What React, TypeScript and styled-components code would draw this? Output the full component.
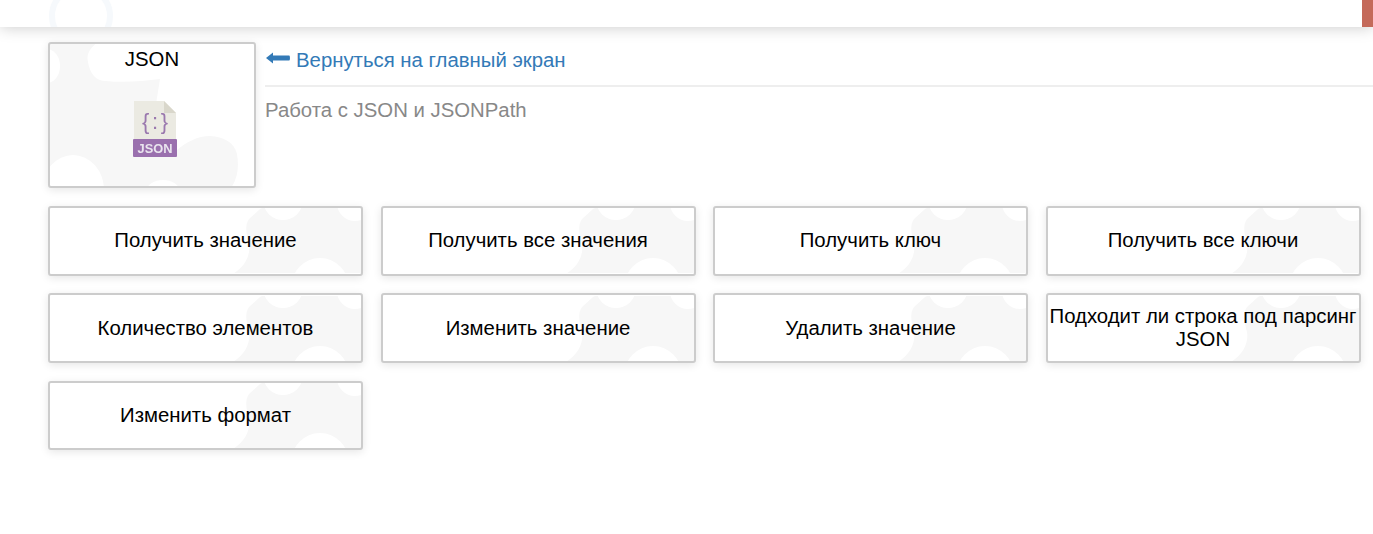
import React from "react";
import styled, { createGlobalStyle } from "styled-components";

const actions = [
  "Получить значение",
  "Получить все значения",
  "Получить ключ",
  "Получить все ключи",
  "Количество элементов",
  "Изменить значение",
  "Удалить значение",
  "Подходит ли строка под парсинг JSON",
  "Изменить формат",
];

const buttonPuzzle = encodeURIComponent(
  `<svg xmlns="http://www.w3.org/2000/svg" width="311" height="65" viewBox="2 2 311 65"><path fill="#f7f7f7" d="M183 69C196 62 203 50 201 38C199 30 196 20 201 13L212 3C216 1 218 2 221 5L224 0H315V69Z"/><circle cx="235" cy="-6" r="20" fill="#fff"/><circle cx="307" cy="-3" r="18" fill="#fff"/><ellipse cx="272" cy="82" rx="29" ry="30" fill="#fff"/></svg>`
);

const tilePuzzle = encodeURIComponent(
  `<svg xmlns="http://www.w3.org/2000/svg" width="204" height="142" viewBox="2 2 204 142"><path fill="#f7f7f7" d="M0 0H50C42 6 38 12 40 20C42 32 48 39 58 39C76 41 96 39 112 37L108 62L112 96L128 109C138 100 150 94 162 94C176 95 186 100 189 112C191 124 190 136 183 146H0Z"/><ellipse cx="-1" cy="24" rx="13" ry="17" fill="#fff"/><ellipse cx="25" cy="148" rx="31" ry="35" fill="#fff"/><ellipse cx="115" cy="148" rx="16" ry="10" fill="#fff"/></svg>`
);

const headerPuzzle = encodeURIComponent(
  `<svg xmlns="http://www.w3.org/2000/svg" width="300" height="27" viewBox="0 0 300 27"><circle cx="81" cy="16" r="29" fill="none" stroke="#f6f9fc" stroke-width="6"/></svg>`
);

const GlobalStyle = createGlobalStyle`
  html, body {
    margin: 0;
    padding: 0;
    background: #fff;
  }
  body {
    font-family: "Liberation Sans", Arial, sans-serif;
    color: #000;
  }
`;

const Page = styled.div`
  width: 1373px;
  height: 534px;
  overflow: hidden;
  display: flex;
  flex-direction: column;
`;

const TopBar = styled.header`
  height: 27px;
  flex: none;
  display: flex;
  justify-content: flex-end;
  background: #fff url("data:image/svg+xml,${headerPuzzle}") no-repeat left top;
  box-shadow: 0 0 16px rgba(0, 0, 0, 0.22);
`;

const UserBlock = styled.div`
  width: 11px;
  background: #c46a5a;
`;

const Content = styled.main`
  padding: 14.5px 0 0 48px;
`;

const Intro = styled.section`
  display: flex;
  gap: 9px;
`;

const Tile = styled.div`
  box-sizing: border-box;
  width: 208px;
  height: 146px;
  flex: none;
  padding-top: 4px;
  display: flex;
  flex-direction: column;
  align-items: center;
  gap: 30px;
  font-size: 20.35px;
  line-height: 23px;
  border: 2px solid #ccc;
  border-radius: 3px;
  background: #fff url("data:image/svg+xml,${tilePuzzle}") no-repeat center;
  box-shadow: 0 2px 8px rgba(0, 0, 0, 0.1);
`;

const FileIcon = styled.svg`
  width: 44px;
  height: 56px;
  margin-left: 5px;
  display: block;
  filter: blur(0.4px);
`;

const Info = styled.div`
  flex: 1;
  min-width: 0;
`;

const BackLink = styled.a`
  box-sizing: border-box;
  height: 45px;
  padding: 7px 0 0 1px;
  display: flex;
  align-items: flex-start;
  gap: 6px;
  color: #337ab7;
  font-size: 20.35px;
  line-height: 23px;
  text-decoration: none;
  border-bottom: 2px solid #eee;
`;

const ArrowSvg = styled.svg`
  margin-top: 3px;
  flex: none;
`;

const Subtitle = styled.p`
  margin: 12px 0 0;
  color: #888;
  font-size: 20.35px;
  line-height: 23px;
`;

const ActionGrid = styled.div`
  margin-top: 18.5px;
  display: grid;
  grid-template-columns: repeat(4, 315px);
  grid-auto-rows: 69.5px;
  column-gap: 17.5px;
  row-gap: 17.9px;
`;

const ActionButton = styled.button`
  box-sizing: border-box;
  padding: 0;
  font-family: inherit;
  font-size: 20.35px;
  line-height: 23px;
  color: #000;
  text-align: center;
  border: 2px solid #ccc;
  border-radius: 3px;
  background: #fff url("data:image/svg+xml,${buttonPuzzle}") no-repeat center;
  box-shadow: 0 2px 8px rgba(0, 0, 0, 0.1);
`;

function JsonFileIcon() {
  return (
    <FileIcon viewBox="0 0 44 56">
      <path d="M1 0H31L43 12V38H1Z" fill="#ebeae2" />
      <path d="M31 0L43 12H31Z" fill="#d9d7cb" />
      <rect x="0" y="38" width="44" height="18" rx="1" fill="#9a70ae" />
      <text
        x="22"
        y="28"
        textAnchor="middle"
        fontFamily="'Liberation Sans', sans-serif"
        fontSize="22"
        textLength="26"
        lengthAdjust="spacing"
        fill="#9a78ae"
      >
        {"{:}"}
      </text>
      <text
        x="22"
        y="52"
        textAnchor="middle"
        fontFamily="'Liberation Sans', sans-serif"
        fontSize="13"
        fontWeight="700"
        textLength="35"
        lengthAdjust="spacingAndGlyphs"
        fill="#e9e4ee"
      >
        JSON
      </text>
    </FileIcon>
  );
}

function ArrowLeft() {
  return (
    <ArrowSvg width="24" height="12" viewBox="0 0 24 12">
      <path d="M0 6L7 0.5V3.4H23.2C24.2 3.4 24.2 8.6 23.2 8.6H7V11.5Z" fill="#337ab7" />
    </ArrowSvg>
  );
}

export default function App() {
  return (
    <Page>
      <GlobalStyle />
      <TopBar>
        <UserBlock />
      </TopBar>
      <Content>
        <Intro>
          <Tile>
            JSON
            <JsonFileIcon />
          </Tile>
          <Info>
            <BackLink href="#">
              <ArrowLeft />
              Вернуться на главный экран
            </BackLink>
            <Subtitle>Работа с JSON и JSONPath</Subtitle>
          </Info>
        </Intro>
        <ActionGrid>
          {actions.map((label) => (
            <ActionButton key={label}>{label}</ActionButton>
          ))}
        </ActionGrid>
      </Content>
    </Page>
  );
}
